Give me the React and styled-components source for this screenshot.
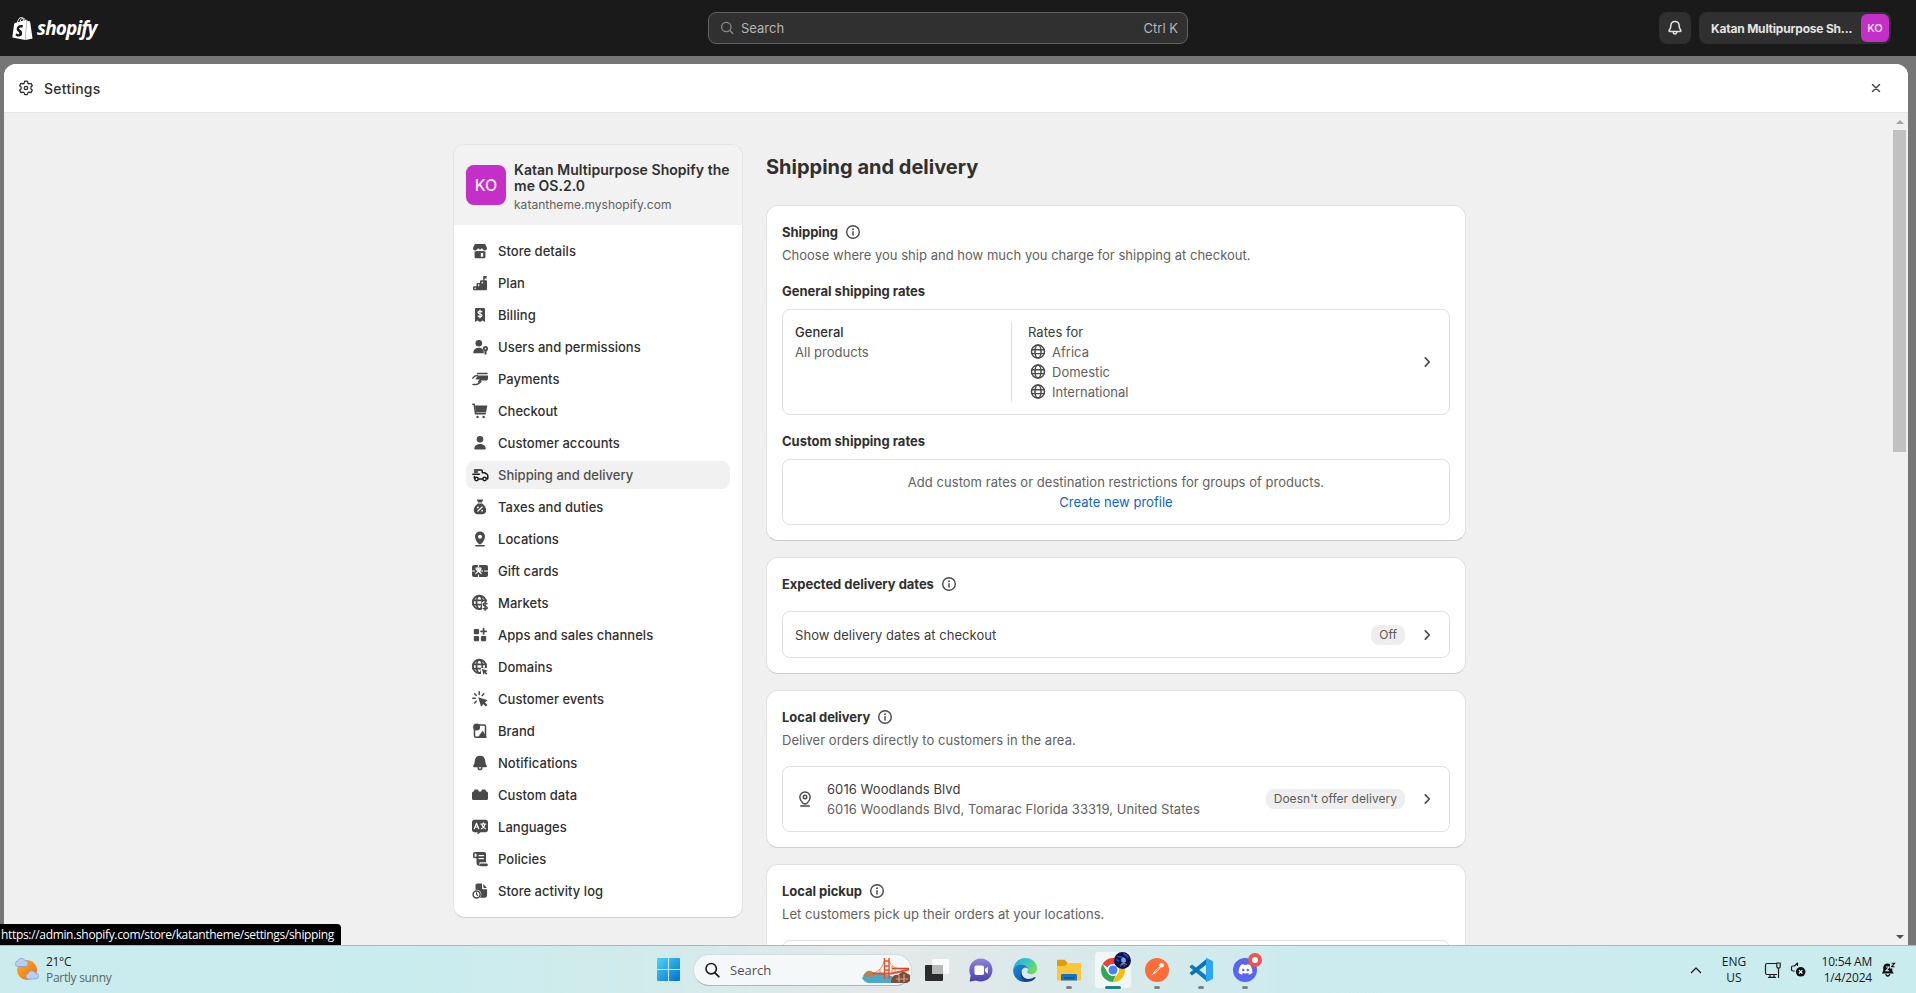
import React from "react";
import styled, { createGlobalStyle } from "styled-components";
import { SiShopify } from "react-icons/si";
import { FaDiscord } from "react-icons/fa";

const GlobalStyle = createGlobalStyle`
  * { box-sizing: border-box; }
  body { margin: 0; font-family: Inter, "Liberation Sans", sans-serif; color: #303030; }
  h1, h2, h3, p { margin: 0; }
  svg { display: block; flex: none; }
`;

const Screen = styled.div`
  width: 1916px;
  height: 993px;
  overflow: hidden;
  display: flex;
  flex-direction: column;
`;

const Browser = styled.div`
  position: relative;
  height: 945px;
  overflow: hidden;
  display: flex;
  flex-direction: column;
  background: #767676;
`;

/* ---------- top bar ---------- */

const TopBar = styled.header`
  flex: none;
  height: 56px;
  background: #1a1a1a;
  display: grid;
  grid-template-columns: 708px 480px 1fr;
  align-items: center;
`;

const Logo = styled.div`
  display: flex;
  align-items: center;
  gap: 3px;
  padding-left: 11px;
  color: #fff;
`;

const Wordmark = styled.span`
  font: italic 700 19px/24px "Open Sans", "Noto Sans", sans-serif;
  letter-spacing: -0.85px;
`;

const SearchField = styled.div`
  height: 32px;
  border: 1px solid #616161;
  border-radius: 8px;
  background: #303030;
  color: #b5b5b5;
  font-size: 13px;
  display: flex;
  align-items: center;
  padding: 0 9px 0 11px;
  gap: 7px;
  span:last-child { margin-left: auto; }
`;

const TopActions = styled.div`
  display: flex;
  justify-content: flex-end;
  gap: 8px;
  padding-right: 25px;
`;

const BellButton = styled.div`
  width: 32px;
  height: 32px;
  border-radius: 8px;
  background: #303030;
  display: grid;
  place-items: center;
`;

const StoreButton = styled.div`
  width: 192px;
  height: 32px;
  border-radius: 8px;
  background: #303030;
  color: #e3e3e3;
  font-size: 12px;
  font-weight: 650;
  letter-spacing: -0.2px;
  display: flex;
  align-items: center;
  justify-content: space-between;
  padding: 0 2px 0 12px;
  white-space: nowrap;
`;

const Avatar = styled.div`
  flex: none;
  width: ${(p) => p.$size}px;
  height: ${(p) => p.$size}px;
  border-radius: ${(p) => (p.$size > 30 ? 8 : 6)}px;
  background: #c430c7;
  color: #fbe6fb;
  font-size: ${(p) => (p.$size > 30 ? 16 : 11)}px;
  font-weight: 500;
  letter-spacing: 0;
  display: grid;
  place-items: center;
`;

/* ---------- settings sheet ---------- */

const Sheet = styled.div`
  flex: 1;
  min-height: 0;
  margin: 8px 8px 0 4px;
  border-radius: 12px 12px 0 0;
  background: #f0f0f0;
  overflow: hidden;
  display: flex;
  flex-direction: column;
`;

const SheetHeader = styled.div`
  flex: none;
  height: 49px;
  background: #fff;
  border-bottom: 1px solid #e6e6e6;
  display: flex;
  align-items: center;
  padding: 0 26px 0 14px;
  font-size: 14px;
  font-weight: 550;
  letter-spacing: 0.25px;
  gap: 10px;
  svg:last-child { margin-left: auto; }
`;

const SheetBody = styled.div`
  flex: 1;
  min-height: 0;
  display: flex;
`;

const Content = styled.div`
  flex: 1;
  overflow: hidden;
  display: flex;
  align-items: flex-start;
  gap: 23px;
  padding: 31px 0 0 449px;
`;

const ScrollTrack = styled.div`
  width: 17px;
  display: flex;
  flex-direction: column;
  align-items: center;
  padding: 7px 0 6px;
`;

const Thumb = styled.div`
  width: 13px;
  height: 322px;
  margin: 6px 0 auto;
  background: #c1c1c1;
`;

const Arrow = styled.div`
  width: 0;
  height: 0;
  border: 4px solid transparent;
  ${(p) => (p.$down ? "border-top-color: #505050; border-bottom: 0;" : "border-bottom-color: #a3a3a3; border-top: 0;")}
`;

const Sidebar = styled.nav`
  flex: none;
  width: 290px;
  border: 1px solid #e3e3e3;
  border-bottom-color: #cfcfcf;
  border-radius: 12px;
  background: #fff;
  overflow: hidden;
`;

const StoreHeader = styled.div`
  height: 80px;
  background: #f2f2f2;
  display: flex;
  align-items: center;
  gap: 8px;
  padding-left: 12px;
`;

const StoreLabel = styled.div`
  padding-top: 5px;
`;

const StoreName = styled.div`
  font-size: 14px;
  font-weight: 600;
  line-height: 16px;
  letter-spacing: 0.04px;
  white-space: nowrap;
`;

const StoreDomain = styled.div`
  margin-top: 3px;
  font-size: 12px;
  line-height: 16px;
  letter-spacing: 0.03px;
  color: #616161;
`;

const NavList = styled.div`
  display: flex;
  flex-direction: column;
  gap: 4px;
  padding: 12px;
`;

const NavItem = styled.div`
  height: 28px;
  display: flex;
  align-items: center;
  gap: 8px;
  padding-left: 4px;
  border-radius: 8px;
  font-size: 13px;
  font-weight: 550;
  letter-spacing: 0.03px;
  color: ${(p) => (p.$active ? "#4f4f4f" : "#303030")};
  background: ${(p) => (p.$active ? "#f1f1f1" : "transparent")};
  svg { color: ${(p) => (p.$active ? "#1a1a1a" : "#4a4a4a")}; }
`;

const Main = styled.main`
  width: 700px;
  display: flex;
  flex-direction: column;
  gap: 16px;
`;

const PageTitle = styled.h1`
  height: 45px;
  padding-top: 9px;
  font-size: 20px;
  font-weight: 650;
  line-height: 28px;
`;

const Card = styled.section`
  border: 1px solid #e0e0e0;
  border-bottom-color: #cccccc;
  border-radius: 12px;
  background: #fff;
  padding: 15px;
`;

const CardHeading = styled.h2`
  height: 22px;
  display: flex;
  align-items: center;
  gap: 5px;
  font-size: 13px;
  font-weight: 650;
  letter-spacing: -0.04px;
`;

const SubHeading = styled.h3`
  margin: 16px 0 8px;
  font-size: 13px;
  font-weight: 650;
  line-height: 20px;
`;

const Text = styled.p`
  font-size: 13px;
  line-height: 20px;
  letter-spacing: ${(p) => p.$tracking || 0.02}px;
  font-weight: ${(p) => (p.$strong ? 550 : 400)};
  color: ${(p) => (p.$subdued ? "#616161" : p.$strong ? "#303030" : "#3c3c3c")};
`;

const Lead = styled(Text)`
  margin-top: 2px;
  color: #616161;
`;

const LinkText = styled(Text)`
  color: #0b65d8;
`;

const Box = styled.div`
  margin-top: ${(p) => p.$gap || 0}px;
  min-height: 47px;
  border: 1px solid #e1e1e1;
  border-radius: 8px;
  padding: 12px;
  display: flex;
  align-items: center;
`;

const CenteredBox = styled(Box)`
  flex-direction: column;
`;

const ProfileColumn = styled.div`
  align-self: stretch;
  width: 217px;
  border-right: 1px solid #e1e1e1;
`;

const ZoneColumn = styled.div`
  padding-left: 16px;
`;

const Zone = styled.div`
  display: flex;
  align-items: center;
  gap: 4px;
`;

const Address = styled.div`
  margin-left: 12px;
`;

const RowEnd = styled.div`
  margin-left: auto;
  display: flex;
  align-items: center;
  gap: 12px;
`;

const Badge = styled.span`
  height: 20px;
  padding: 0 8px;
  border-radius: 8px;
  background: #eeeeee;
  color: #5c5c5c;
  font-size: 12px;
  font-weight: 400;
  letter-spacing: 0.04px;
  line-height: 20px;
`;

const StatusUrl = styled.div`
  position: absolute;
  left: 0;
  bottom: 0;
  width: 341px;
  height: 21px;
  padding-left: 1px;
  border-radius: 0 4px 0 0;
  background: #000;
  color: #fff;
  font: 12px/21px "Open Sans", "Noto Sans", sans-serif;
  letter-spacing: -0.33px;
  white-space: nowrap;
`;

/* ---------- desktop taskbar ---------- */

const Taskbar = styled.footer`
  height: 48px;
  border-top: 1px solid #a9b9bb;
  background: linear-gradient(90deg, #cbebed 0, #c9ecee 400px, #d2ebeb 650px, #e5e8e8 880px, #d9e9ea 1080px, #cdebee 1280px, #c9ecee 100%);
  display: flex;
  align-items: center;
  font-family: "Open Sans", "Noto Sans", sans-serif;
  font-size: 12px;
  line-height: 16px;
  color: #1b1b1b;
`;

const Weather = styled.div`
  width: 647px;
  display: flex;
  align-items: center;
  gap: 7px;
  padding-left: 14px;
  letter-spacing: -0.3px;
`;

const Muted = styled.div`
  color: #56676a;
`;

const Slot = styled.div`
  position: relative;
  width: ${(p) => p.$width || 44}px;
  height: 47px;
  display: grid;
  place-items: center;
`;

const ActiveTile = styled.div`
  width: 38px;
  height: 38px;
  border-radius: 4px;
  background: #f1f6f6;
  border: 1px solid #dfe8e8;
  display: grid;
  place-items: center;
`;

const Running = styled.span`
  position: absolute;
  bottom: 4px;
  left: 50%;
  transform: translateX(-50%);
  width: ${(p) => (p.$active ? 16 : 6)}px;
  height: 3px;
  border-radius: 2px;
  background: ${(p) => (p.$active ? "#1f8291" : "#7b8586")};
`;

const AppBadge = styled.span`
  position: absolute;
  right: ${(p) => p.$right}px;
  top: ${(p) => p.$top}px;
`;

const TaskSearch = styled.div`
  width: 219px;
  height: 32px;
  margin: 0 3px;
  border: 1px solid #cfdcdd;
  border-bottom-color: #abb7b8;
  border-radius: 16px;
  background: #f4f8f8;
  color: #505050;
  font-size: 13px;
  display: flex;
  align-items: center;
  padding: 0 1px 0 10px;
  gap: 10px;
  svg:last-child { margin-left: auto; }
`;

const Tray = styled.div`
  margin-left: auto;
  display: flex;
  align-items: center;
  padding-right: 20px;
`;

const Language = styled.div`
  width: 34px;
  margin-left: 15px;
  text-align: center;
`;

const TrayIcons = styled.div`
  display: flex;
  gap: 8px;
  margin-left: 13px;
`;

const Clock = styled.div`
  width: 66px;
  text-align: right;
  margin-right: 9px;
  white-space: nowrap;
  letter-spacing: -0.2px;
`;

/* ---------- icons ---------- */

const Svg = ({ size = 20, box = 20, children, ...rest }) => (
  <svg width={size} height={size} viewBox={`0 0 ${box} ${box}`} fill="none" {...rest}>
    {children}
  </svg>
);

const line = { stroke: "currentColor", strokeWidth: 1.5, strokeLinecap: "round", strokeLinejoin: "round" };
const cut = { stroke: "#fff", strokeWidth: 1.2, strokeLinecap: "round", strokeLinejoin: "round" };

const globe = (
  <>
    <circle cx="9.4" cy="9.4" r="6.6" {...line} strokeWidth="1.9" />
    <ellipse cx="9.4" cy="9.4" rx="2.9" ry="6.6" {...line} strokeWidth="1.7" />
    <path d="M3 7.400h13M3 11.600h13" {...line} strokeWidth="1.700" />
  </>
);

const icons = {
  store: (
    <g fill="currentColor">
      <path d="M5.6 3h8.8c.5 0 .9.3 1.1.7L17 7a2.2 2.2 0 0 1-3.900 1.600L11.800 7.300 10 8.800 8.200 7.300 6.900 8.600A2.200 2.200 0 0 1 3 7l1.500-3.300c.2-.4.6-.7 1.100-.7Z" />
      <path fillRule="evenodd" d="M4.600 10.300c1 .2 1.700 0 2.400-.5 1 .6 2 .6 3 0 1 .6 2 .6 3 0 .7.5 1.400.7 2.400.5V16c0 .8-.5 1.300-1.300 1.300H5.900c-.8 0-1.300-.5-1.300-1.300v-5.700Zm6.200 1.700v3.800h2.400V12h-2.400Z" />
    </g>
  ),
  plan: (
    <>
      <path fill="currentColor" fillRule="evenodd" d="M3 14.500c0-.8.5-1.300 1.300-1.300h2.200v-2c0-.8.500-1.300 1.300-1.300h2.200V8.500c0-.8.5-1.300 1.300-1.300h1.900V3h4l-1 1.300 1 1.300h-2.600v1.600h1.100c.8 0 1.300.5 1.300 1.300V16c0 .8-.5 1.300-1.300 1.300H4.300C3.500 17.300 3 16.800 3 16v-1.500Z" />
      <path d="M5.100 15v.6M8.700 11.700v1M12.200 9v1" {...cut} />
    </>
  ),
  billing: (
    <>
      <path fill="currentColor" d="M6.200 3h7.600c.7 0 1.200.5 1.200 1.200V17l-2.300-1.500L10 17l-2.700-1.500L5 17V4.200C5 3.500 5.500 3 6.200 3Z" />
      <path d="M11.900 6.900c-.4-.5-1-.7-1.900-.7-1.100 0-1.900.5-1.900 1.400 0 2 3.800.8 3.800 2.800 0 .9-.8 1.400-1.900 1.400-.9 0-1.500-.2-1.900-.7M10 5.200v7.600" {...cut} />
    </>
  ),
  users: (
    <g fill="currentColor">
      <circle cx="8.800" cy="6.200" r="3.300" />
      <path d="M3.200 15.600c.3-3 2.600-4.800 5.600-4.800 1.600 0 2.900.4 3.800 1.200.2 1 .6 1.700 1.200 2.200v2H4c-.6 0-.9-.2-.8-.6Z" />
      <path fillRule="evenodd" d="M15.500 9a2.700 2.700 0 0 1 1 5.200v3.300h-2v-3.300A2.700 2.700 0 0 1 15.500 9Zm0 1.900a.8.8 0 1 0 0 1.600.8.8 0 0 0 0-1.600Z" />
    </g>
  ),
  payments: (
    <>
      <path d="M7.500 4.500H17M2.800 9.200c1.300-2 2.600-2.700 4.500-2.700M3 15.500h3.500c1.800 0 3-1.300 4.500-3" {...line} />
      <path fill="currentColor" d="M8 6.400h10v3c0 1.400-.8 2.200-2.200 2.200h-4.600l-2 1.900c-.7.6-2 .1-1.300-.8l1.600-2.100H6.300c-.8 0-.8-.9-.2-1.400L8 6.400Z" />
    </>
  ),
  cart: (
    <>
      <path d="M2.800 3.200h1.400l1.300 9.600h9.800" {...line} />
      <path fill="currentColor" d="M5 4.500h12.300l-1.100 6.200c-.1.600-.5.900-1.100.9H6L5 4.500Z" />
      <circle cx="7.500" cy="16" r="1.200" fill="currentColor" />
      <circle cx="13.600" cy="16" r="1.200" fill="currentColor" />
    </>
  ),
  person: (
    <g fill="currentColor">
      <circle cx="10" cy="6.200" r="3.300" />
      <path d="M4.200 15.600c.3-3 2.800-4.600 5.800-4.600s5.500 1.600 5.800 4.600c.1.500-.2.800-.8.800H5c-.6 0-.9-.3-.8-.8Z" />
    </g>
  ),
  truck: (
    <>
      <path d="M4.500 5h6.700c.7 0 1.100.4 1.100 1v1.700h2.300l2.500 1.700c.5.400.7.8.7 1.400v2.400c0 .5-.2.800-.7.800M2.800 9.200h6.700M4.500 7h2.800M4.400 11.600v1.600M8.700 14h3.700" {...line} />
      <circle cx="6.500" cy="14" r="1.700" {...line} />
      <circle cx="14.600" cy="14" r="1.700" {...line} />
    </>
  ),
  taxes: (
    <>
      <path fill="currentColor" d="M6.700 2.500h6.600l-1.500 3h-3.600l-1.500-3ZM7.800 6.500h4.400c2.500 2 4 4.400 4 6.800 0 2.800-1.700 4-4.200 4H8c-2.500 0-4.200-1.200-4.200-4 0-2.400 1.500-4.800 4-6.800Z" />
      <path d="m7.900 14 4.200-4" {...cut} />
      <circle cx="7.900" cy="10.400" r=".9" fill="#fff" />
      <circle cx="12.100" cy="13.700" r=".9" fill="#fff" />
    </>
  ),
  pin: (
    <>
      <path fill="currentColor" fillRule="evenodd" d="M10 2.500a5 5 0 0 1 5 5c0 2.700-1.800 5.500-3.600 7.200-.8.800-2 .8-2.800 0C6.800 13 5 10.200 5 7.500a5 5 0 0 1 5-5Zm0 3.200a2 2 0 1 0 0 4 2 2 0 0 0 0-4Z" />
      <path d="M5.800 16.700h8.400" {...line} />
    </>
  ),
  gift: (
    <>
      <rect x="2" y="4" width="16" height="12" rx="2" fill="currentColor" />
      <path d="M8.500 4v2m0 8v2M2 10h2.500m10 0H18M8.500 10C6 8.500 5.500 7.500 6.500 7s2 .5 2 3c0-2.500 1-3.500 2-3s.5 1.500-2 3Zm0 0-2.700 2.700M8.500 10l2.700 2.700M8.500 10h4" {...cut} />
    </>
  ),
  markets: (
    <>
      {globe}
      <path fill="#fff" d="M12 9h8v11h-8z" />
      <path d="M17 10.800c-.4-.5-1-.7-1.900-.7-1.100 0-1.900.5-1.900 1.400 0 2.200 4 1.200 4 3.200 0 .9-.8 1.400-2.100 1.400-.9 0-1.600-.2-2-.7M15.100 9v8.300" {...line} strokeWidth="1.400" />
    </>
  ),
  apps: (
    <>
      <g fill="currentColor">
        <rect x="3.800" y="4" width="5.300" height="5.300" rx="1.100" />
        <rect x="3.800" y="10.900" width="5.300" height="5.300" rx="1.100" />
        <rect x="10.900" y="10.900" width="5.300" height="5.300" rx="1.100" />
      </g>
      <path d="M13.600 3.700v5.200M11 6.300h5.200" {...line} strokeWidth="1.700" />
    </>
  ),
  domains: (
    <>
      {globe}
      <path fill="#fff" d="M11 11h9v9h-9z" />
      <path fill="currentColor" d="m11.900 11.800 5.800 1.900-2 1.200 1.700 1.700-1.200 1.100-1.600-1.700-1.100 1.800-1.600-6Z" />
    </>
  ),
  events: (
    <>
      <path d="M9.200 2.800v2.600M4.600 4.800l1.700 1.700M2.800 9.300h2.500M13.900 4.800l-1.700 1.700M4.600 14l1.700-1.700" {...line} />
      <path fill="currentColor" d="m8.200 8.200 8.600 2.800c.6.200.6.700.1 1l-2.100 1.300 2.600 2.600-1.600 1.600-2.600-2.600-1.300 2.100c-.3.500-.8.400-1-.1L8.200 8.200Z" />
    </>
  ),
  brand: (
    <>
      <rect x="4.500" y="4" width="11" height="12.200" rx="1.500" {...line} />
      <circle cx="6.600" cy="6" r="3.500" fill="currentColor" />
      <path fill="currentColor" d="m7.500 17 4.300-6.200c.5-.6 1.100-.6 1.600 0L16.500 15.500V17h-9Z" />
    </>
  ),
  bell: (
    <>
      <path fill="currentColor" d="M10 2.700c3 0 4.900 2 5.200 4.900l.3 2.600 1.300 2.500c.4.700 0 1.500-.8 1.500H4c-.8 0-1.200-.8-.8-1.500l1.300-2.500.3-2.600c.3-2.900 2.200-4.900 5.200-4.900Z" />
      <path d="M8.200 14.800a1.800 1.800 0 0 0 3.600 0" {...line} />
    </>
  ),
  data: (
    <path fill="currentColor" d="M5 4.600h2.600c.5 0 .8.300.8.800l.4 1.100h2.400l.4-1.100c0-.5.300-.8.800-.8H15c.5 0 .8.300.8.800l.4 1.100c1.100 0 1.800.6 1.800 1.500v5.500c0 .9-.6 1.500-1.500 1.500h-13C2.600 15 2 14.400 2 13.500V8c0-.9.700-1.500 1.800-1.500l.4-1.100c0-.5.300-.8.8-.8Z" />
  ),
  languages: (
    <>
      <path fill="currentColor" d="M4.500 2.800h11c1.500 0 2.500 1 2.500 2.500v7.400c0 1.500-1 2.500-2.500 2.500h-5L8.300 17c-.4.300-.8.200-.8-.3v-1.500h-3C3 15.200 2 14.200 2 12.700V5.300c0-1.500 1-2.500 2.500-2.500Z" />
      <path d="m4.300 11.700 2.200-5.500 2.200 5.500M5.200 10h2.700M10.800 7h5M13.300 5.800V7M11.500 11.700c2-1 3.100-2.500 3.300-4.500M11.800 7.400c.4 1.900 1.600 3.500 3.700 4.300" {...cut} />
    </>
  ),
  policies: (
    <>
      <path fill="currentColor" fillRule="evenodd" d="M5 3h9c1.200 0 2 .8 2 2v8.200H9.500v2.300c0 .9.500 1.500 1 1.500-2.300.2-4-.9-4-3.300V9.300H4.700C3.700 9.300 3 8.600 3 7.600V5c0-1.200.8-2 2-2Zm.4 1.600c-.5 0-.8.3-.8.8v2.300h1.900V5.500c0-.5-.4-.9-1.100-.9Z" />
      <path d="M9 6.600h4.500M9 9.600h4.500" {...cut} />
      <rect x="9.800" y="14.400" width="8" height="2.800" rx="1.300" fill="currentColor" />
    </>
  ),
  log: (
    <>
      <path fill="currentColor" d="M7.500 2.500H12V7c0 .8.400 1.200 1.200 1.200h3.900V14c0 1.700-1 2.700-2.700 2.700H9.500L5.500 9.500v-5c0-1.200.8-2 2-2ZM13.300 3l3.700 3.900h-3c-.5 0-.7-.3-.7-.7V3Z" />
      <circle cx="6.600" cy="13.400" r="4.700" fill="#fff" />
      <circle cx="6.600" cy="13.400" r="3.500" {...line} />
      <path d="M6.600 11.800v1.800l1.100.8" {...line} strokeWidth="1.200" />
    </>
  ),
};

const InfoIcon = () => (
  <Svg color="#4a4a4a">
    <circle cx="10" cy="10" r="6.300" {...line} strokeWidth="1.400" />
    <path d="M10 9.700v3.300" {...line} />
    <circle cx="10" cy="7.200" r=".95" fill="currentColor" />
  </Svg>
);

const GlobeIcon = () => (
  <Svg color="#4a4a4a">
    <circle cx="10" cy="9.600" r="6.500" {...line} />
    <ellipse cx="10" cy="9.600" rx="3" ry="6.500" {...line} />
    <path d="M3.800 7.700h12.400M3.800 11.600h12.400" {...line} strokeWidth="1.400" />
  </Svg>
);

const PinOutline = () => (
  <Svg color="#4a4a4a">
    <path d="M10 3a5.200 5.200 0 0 1 5.200 5.200c0 2.400-1.500 4.300-3 5.800-1.300 1.200-3.100 1.200-4.400 0-1.500-1.500-3-3.400-3-5.800A5.200 5.200 0 0 1 10 3ZM5.700 17h8.600" {...line} strokeWidth="1.400" />
    <circle cx="10" cy="8" r="1.800" {...line} strokeWidth="1.400" />
  </Svg>
);

const Chevron = () => (
  <Svg color="#4a4a4a">
    <path d="m8.300 5.900 4 4.100-4 4.100" {...line} strokeWidth="1.700" />
  </Svg>
);

const GearIcon = () => (
  <Svg size={16} box={16} color="#303030">
    <path d="M6.700 1.200h2.600l.5 1.900 1.300.8 1.900-.6 1.300 2.300-1.400 1.400v1.900l1.400 1.400-1.300 2.300-1.900-.5-1.300.7-.5 1.900H6.700l-.5-1.900-1.300-.7-1.900.5-1.300-2.300 1.400-1.400V7L1.700 5.600 3 3.300l1.900.6 1.300-.8.500-1.900Z" {...line} strokeWidth="1.300" />
    <circle cx="8" cy="8" r="1.700" {...line} strokeWidth="1.300" />
  </Svg>
);

const CloudShape = ({ x, y }) => (
  <path transform={`translate(${x} ${y})`} d="M3 9a2.800 2.800 0 0 1 .3-5.500A3.800 3.800 0 0 1 10.400 3 3 3 0 0 1 10.800 9H3Z" fill="#b9cdf5" stroke="#7d9be0" strokeWidth=".7" />
);

const WeatherIcon = () => (
  <Svg size={25} box={25}>
    <defs>
      <linearGradient id="sun" x1="0" y1="0" x2="1" y2="1">
        <stop stopColor="#f9b22b" />
        <stop offset="1" stopColor="#f0690f" />
      </linearGradient>
    </defs>
    <circle cx="13" cy="13" r="10" fill="url(#sun)" />
    <CloudShape x={0.5} y={0.5} />
    <CloudShape x={11} y={13} />
  </Svg>
);

const WindowsIcon = () => (
  <Svg size={23} box={23}>
    <defs>
      <linearGradient id="win" x1="0" y1="0" x2="23" y2="23" gradientUnits="userSpaceOnUse">
        <stop stopColor="#4fd2fb" />
        <stop offset="1" stopColor="#0070d0" />
      </linearGradient>
    </defs>
    <path fill="url(#win)" d="M1 0h10v11H0V1a1 1 0 0 1 1-1Zm11 0h10a1 1 0 0 1 1 1v10H12V0ZM0 12h11v11H1a1 1 0 0 1-1-1V12Zm12 0h11v10a1 1 0 0 1-1 1H12V12Z" />
  </Svg>
);

const BridgeIcon = () => (
  <svg width="48" height="26" viewBox="0 0 48 26" fill="none">
    <path d="M0 21c3-5 7-6 12-5l10 1 8 2 4 7H6c-3-1-5-3-6-5Z" fill="#4ba9c9" />
    <path d="M1 19c2-4 5-6 8-5l5 3-5 3-8-1Z" fill="#b98254" />
    <path d="M29 26c0-6 3-9 7-8l5-4 7 4v6l-3 2H29Z" fill="#7c4c3c" />
    <path d="M34 22h12M37 18v7M42 17v8" stroke="#d9a07a" strokeWidth="1.200" />
    <path d="M10 16.500h20l17-4" stroke="#e2512b" strokeWidth="2" />
    <path d="M30 11.500h17" stroke="#c8452a" strokeWidth="1.500" />
    <path d="M22.500 1v21M27 1v21M22.500 4H27M22.500 9H27M22.500 13H27" stroke="#e2512b" strokeWidth="1.400" />
    <path d="M22 4c-1 6-5 10-10 12M27.500 4c1 5 6 8 13 8M30 9v7M33 11v5M18 12v4" stroke="#e2512b" strokeWidth=".7" />
  </svg>
);

const TaskViewIcon = () => (
  <Svg size={24} box={24}>
    <rect x="7" y="1" width="17" height="15" rx="1" fill="#fbfbfb" />
    <rect x="0" y="7" width="18" height="16" rx="1" fill="#2c2c2c" />
    <rect x="7" y="7" width="11" height="9" fill="#b9b9b9" />
  </Svg>
);

const ChatIcon = () => (
  <Svg size={24} box={24}>
    <defs>
      <linearGradient id="chat" x1="0" y1="1" x2="0" y2="0">
        <stop stopColor="#4b3fae" />
        <stop offset="1" stopColor="#8f86d8" />
      </linearGradient>
    </defs>
    <path d="M12 .5A11.500 11.500 0 1 1 7 22.400L1.500 23.500c-.6.100-.9-.2-.8-.8L1.700 17.500A11.500 11.500 0 0 1 12 .5Z" fill="url(#chat)" />
    <rect x="5.500" y="7.500" width="9.500" height="9.500" rx="1.800" fill="#fff" />
    <path d="m16 11 2.800-2.200v7L16 13.600V11Z" fill="#fff" />
  </Svg>
);

const EdgeIcon = () => (
  <Svg size={24} box={24}>
    <defs>
      <linearGradient id="edgeTop" x1="0" y1="0" x2="1" y2=".4">
        <stop stopColor="#2aa6e0" />
        <stop offset=".6" stopColor="#37c6c4" />
        <stop offset="1" stopColor="#6edb5a" />
      </linearGradient>
      <linearGradient id="edgeLow" x1="0" y1="0" x2="1" y2="1">
        <stop stopColor="#1b8fdc" />
        <stop offset="1" stopColor="#0c4a9c" />
      </linearGradient>
    </defs>
    <path d="M.3 11C1 4.600 6 0 12.200 0 19 0 24 4.800 24 10.200c0 3.800-2.700 6-5.800 6-2.400 0-4.200-.8-4.200-1.900 0-.8 1-1.100 1-2.900C15 8.500 12 6.500 8.500 6.500 4.500 6.500 1.300 8.500.3 11Z" fill="url(#edgeTop)" />
    <path d="M.1 12C.3 8.600 4 6.500 8.200 6.500c3.500 0 6.500 1.800 7 4.500-.9-1-2-1.500-3-1.500-2 0-3.700 2.200-3.700 4.800 0 4.500 4 7.500 8.500 7.500C15.500 23.300 13.800 24 12 24 5.200 24 0 18.600.1 12Z" fill="url(#edgeLow)" />
    <path d="M9.200 12.500c-.8 1.400-.9 3.300 0 5 1.800 3.600 7.300 4.800 12.600 1.600.6-.3 1 .1.700.6C20.800 22.500 17 24 14 23.700c-5-.5-8-6.700-4.800-11.200Z" fill="#123f86" />
  </Svg>
);

const FolderIcon = () => (
  <Svg size={24} box={24}>
    <path d="M0 3c0-.8.5-1.300 1.300-1.300h6.500L10.500 5H22c1 0 1.500.5 1.500 1.500V10H0V3Z" fill="#dd9b12" />
    <path d="M0 8h8l2.500-3H23c.6 0 1 .4 1 1v15.500c0 .6-.4 1-1 1H1c-.6 0-1-.4-1-1V8Z" fill="#fbc638" />
    <path d="M4 22.500v-5C4 16.500 4.600 16 5.500 16h13c.9 0 1.500.5 1.500 1.500v5H4Z" fill="#1574c4" />
    <path d="M7 20h10" stroke="#0c4f94" strokeWidth="1.500" />
  </Svg>
);

const ChromeIcon = () => (
  <Svg size={24} box={24}>
    <circle cx="12" cy="12" r="12" fill="#fff" />
    <path d="M1.600 6A12 12 0 0 1 22.400 6H12a6 6 0 0 0-5.400 3.400L1.600 6Z" fill="#ea4335" />
    <path d="M22.400 6A12 12 0 0 1 11.700 24l5.500-9A6 6 0 0 0 12 6h10.400Z" fill="#fbbc05" />
    <path d="M11.700 24A12 12 0 0 1 1.600 6l5.200 9A6 6 0 0 0 15 17.200L11.700 24Z" fill="#34a853" />
    <circle cx="12" cy="12" r="5.600" fill="#fff" />
    <circle cx="12" cy="12" r="4.500" fill="#4285f4" />
  </Svg>
);

const ProfileBadge = () => (
  <Svg size={17} box={17}>
    <circle cx="8.500" cy="8.500" r="8.500" fill="#101442" />
    <path d="M3 4c2 1.500 3 0 5 1M9.500 1.500c2 1 3.500 1.500 4.500 4M2 7.500l3 1.500M6 14.500l2-3 3 3" stroke="#2750d8" strokeWidth="1.500" />
    <path d="m7 7 2-2 2.500 1.500.5 3-2 1.500-2.500-1L7 7Z" fill="#7aa7dc" />
    <path d="m8 13 1-2 4 1.500" stroke="#d98fb4" strokeWidth=".8" />
  </Svg>
);

const PostmanIcon = () => (
  <Svg size={24} box={24}>
    <circle cx="12" cy="12" r="12" fill="#ff6c37" />
    <path d="m6.500 17.500 3-4.500 5-4.500 1.300 1.300-5 5-4.300 2.700Z" fill="#fff" />
    <circle cx="16.600" cy="7.300" r="2.300" fill="#fff" />
    <path d="m10 14 4-4" stroke="#ff6c37" strokeWidth=".7" />
  </Svg>
);

const CodeIcon = () => (
  <Svg size={24} box={24}>
    <path d="m1 8.300 1.500-1.400c.4-.3.800-.3 1.200 0L18 18v5.500L1 9.500c-.4-.4-.4-.8 0-1.200Z" fill="#0a7bc4" />
    <path d="m1 15.700 1.500 1.400c.4.300.8.300 1.200 0L18 6V.5L1 14.500c-.4.400-.4.800 0 1.200Z" fill="#0a72b8" />
    <path d="m17.500 0 5.700 2.700c.5.200.8.600.8 1.200v16.200c0 .6-.3 1-.8 1.200L17.500 24c-.7 0-.5-.4-.5-1V1c0-.6-.1-1 .5-1Z" fill="#2aa7f0" />
  </Svg>
);

const DiscordTile = styled.div`
  width: 24px;
  height: 24px;
  border-radius: 50%;
  background: #5865f2;
  color: #fff;
  display: grid;
  place-items: center;
`;

const menu = [
  ["store", "Store details"],
  ["plan", "Plan"],
  ["billing", "Billing"],
  ["users", "Users and permissions"],
  ["payments", "Payments"],
  ["cart", "Checkout"],
  ["person", "Customer accounts"],
  ["truck", "Shipping and delivery"],
  ["taxes", "Taxes and duties"],
  ["pin", "Locations"],
  ["gift", "Gift cards"],
  ["markets", "Markets"],
  ["apps", "Apps and sales channels"],
  ["domains", "Domains"],
  ["events", "Customer events"],
  ["brand", "Brand"],
  ["bell", "Notifications"],
  ["data", "Custom data"],
  ["languages", "Languages"],
  ["policies", "Policies"],
  ["log", "Store activity log"],
];

export default function App() {
  return (
    <Screen>
      <GlobalStyle />
      <Browser>
        <TopBar>
          <Logo>
            <SiShopify size={23} />
            <Wordmark>shopify</Wordmark>
          </Logo>
          <SearchField>
            <Svg size={14} box={14} color="#8a8a8a">
              <circle cx="6.300" cy="6" r="4.700" {...line} strokeWidth="1.300" />
              <path d="m9.800 9.500 3 3" {...line} strokeWidth="1.300" />
            </Svg>
            <span>Search</span>
            <span>Ctrl K</span>
          </SearchField>
          <TopActions>
            <BellButton>
              <Svg color="#e3e3e3">
                <path d="M10 3.600c-2.400 0-4 1.700-4.200 4l-.2 2-1.400 2.700c-.3.700 0 1.300.7 1.300h10.200c.7 0 1-.6.700-1.300l-1.400-2.700-.2-2c-.2-2.300-1.800-4-4.200-4Z" {...line} />
                <path d="M8.200 14.300a1.850 2.200 0 0 0 3.600 0" {...line} />
              </Svg>
            </BellButton>
            <StoreButton>
              Katan Multipurpose Sh...
              <Avatar $size={28}>KO</Avatar>
            </StoreButton>
          </TopActions>
        </TopBar>

        <Sheet>
          <SheetHeader>
            <GearIcon />
            Settings
            <Svg size={12} box={12} color="#4a4a4a">
              <path d="m2.500 2.500 7 7m0-7-7 7" {...line} />
            </Svg>
          </SheetHeader>
          <SheetBody>
            <Content>
              <Sidebar>
                <StoreHeader>
                  <Avatar $size={40}>KO</Avatar>
                  <StoreLabel>
                    <StoreName>Katan Multipurpose Shopify the<br />me OS.2.0</StoreName>
                    <StoreDomain>katantheme.myshopify.com</StoreDomain>
                  </StoreLabel>
                </StoreHeader>
                <NavList>
                  {menu.map(([icon, label]) => (
                    <NavItem key={icon} $active={icon === "truck"}>
                      <Svg>{icons[icon]}</Svg>
                      {label}
                    </NavItem>
                  ))}
                </NavList>
              </Sidebar>

              <Main>
                <PageTitle>Shipping and delivery</PageTitle>

                <Card>
                  <CardHeading>Shipping <InfoIcon /></CardHeading>
                  <Lead>Choose where you ship and how much you charge for shipping at checkout.</Lead>
                  <SubHeading>General shipping rates</SubHeading>
                  <Box>
                    <ProfileColumn>
                      <Text $strong>General</Text>
                      <Text $subdued>All products</Text>
                    </ProfileColumn>
                    <ZoneColumn>
                      <Text>Rates for</Text>
                      {["Africa", "Domestic", "International"].map((zone) => (
                        <Zone key={zone}>
                          <GlobeIcon />
                          <Text $subdued>{zone}</Text>
                        </Zone>
                      ))}
                    </ZoneColumn>
                    <RowEnd><Chevron /></RowEnd>
                  </Box>
                  <SubHeading>Custom shipping rates</SubHeading>
                  <CenteredBox>
                    <Text $subdued $tracking={0.035}>Add custom rates or destination restrictions for groups of products.</Text>
                    <LinkText>Create new profile</LinkText>
                  </CenteredBox>
                </Card>

                <Card>
                  <CardHeading>Expected delivery dates <InfoIcon /></CardHeading>
                  <Box $gap={16}>
                    <Text $tracking={0.05}>Show delivery dates at checkout</Text>
                    <RowEnd>
                      <Badge>Off</Badge>
                      <Chevron />
                    </RowEnd>
                  </Box>
                </Card>

                <Card>
                  <CardHeading>Local delivery <InfoIcon /></CardHeading>
                  <Lead $tracking={0.05}>Deliver orders directly to customers in the area.</Lead>
                  <Box $gap={16}>
                    <PinOutline />
                    <Address>
                      <Text $tracking={0.06}>6016 Woodlands Blvd</Text>
                      <Text $subdued $tracking={0.06}>6016 Woodlands Blvd, Tomarac Florida 33319, United States</Text>
                    </Address>
                    <RowEnd>
                      <Badge>Doesn't offer delivery</Badge>
                      <Chevron />
                    </RowEnd>
                  </Box>
                </Card>

                <Card>
                  <CardHeading>Local pickup <InfoIcon /></CardHeading>
                  <Lead $tracking={0.045}>Let customers pick up their orders at your locations.</Lead>
                  <Box $gap={16} />
                </Card>
              </Main>
            </Content>
            <ScrollTrack>
              <Arrow />
              <Thumb />
              <Arrow $down />
            </ScrollTrack>
          </SheetBody>
        </Sheet>
        <StatusUrl>https://admin.shopify.com/store/katantheme/settings/shipping</StatusUrl>
      </Browser>

      <Taskbar>
        <Weather>
          <WeatherIcon />
          <div>
            <div>21°C</div>
            <Muted>Partly sunny</Muted>
          </div>
        </Weather>
        <Slot $width={43}><WindowsIcon /></Slot>
        <TaskSearch>
          <Svg size={16} box={16} color="#1b1b1b">
            <circle cx="7.200" cy="6.700" r="5.200" {...line} strokeWidth="1.600" />
            <path d="m11 10.800 3.800 3.800" {...line} strokeWidth="1.800" />
          </Svg>
          Search
          <BridgeIcon />
        </TaskSearch>
        <Slot><TaskViewIcon /></Slot>
        <Slot><ChatIcon /></Slot>
        <Slot><EdgeIcon /></Slot>
        <Slot><FolderIcon /><Running /></Slot>
        <Slot>
          <ActiveTile><ChromeIcon /></ActiveTile>
          <AppBadge $right={4} $top={6}><ProfileBadge /></AppBadge>
          <Running $active />
        </Slot>
        <Slot><PostmanIcon /><Running /></Slot>
        <Slot><CodeIcon /><Running /></Slot>
        <Slot>
          <DiscordTile><FaDiscord size={15} /></DiscordTile>
          <AppBadge $right={5} $top={7}>
            <Svg size={14} box={14}>
              <circle cx="7" cy="7" r="7" fill="#ee5350" />
              <circle cx="7" cy="7" r="3" fill="#fff" />
            </Svg>
          </AppBadge>
          <Running />
        </Slot>
        <Tray>
          <Svg size={12} box={12} color="#1b1b1b">
            <path d="m1.500 8.500 4.500-4.500 4.500 4.500" {...line} strokeWidth="1.300" />
          </Svg>
          <Language>ENG<br />US</Language>
          <TrayIcons>
            <Svg size={18} box={18} color="#1b1b1b">
              <path d="M12 2.500H3A1.500 1.500 0 0 0 1.500 4v8A1.500 1.500 0 0 0 3 13.500h9.500M6 13.700V16m4-2.300V16M4.500 16.300h7M14.500 7v9.500M12.800 2h3.400v3.500a1.700 1.700 0 0 1-3.400 0V2Z" {...line} strokeWidth="1.200" />
            </Svg>
            <Svg size={16} box={16} color="#1b1b1b">
              <path d="M7.500 4.500V2L4.500 5H2.800c-.8 0-1.300.5-1.300 1.300v2.500c0 .8.500 1.200 1.300 1.200h1.500" {...line} strokeWidth="1.200" />
              <circle cx="10.700" cy="10.800" r="4.800" fill="#111" />
              <path d="m9 9.100 3.400 3.400m0-3.400L9 12.500" stroke="#fff" strokeWidth="1.200" />
            </Svg>
          </TrayIcons>
          <Clock>10:54 AM<br />1/4/2024</Clock>
          <Svg size={15} box={15} color="#111">
            <path d="M6.500 1.500C3.800 1.500 2.200 3.300 2.200 6v3L.8 11.500h12L11.300 9V6.500H9V2.300c-.7-.5-1.500-.8-2.500-.8Z" fill="currentColor" />
            <path d="M5 12.800a1.900 1.900 0 0 0 3.500 0" {...line} />
            <path d="M10.600 1.200h3l-3 3.600h3" stroke="currentColor" strokeWidth="1.100" />
            <path d="M5 5h3.200L5 8.700h3.200" stroke="#d6f0f0" strokeWidth="1.100" />
          </Svg>
        </Tray>
      </Taskbar>
    </Screen>
  );
}
